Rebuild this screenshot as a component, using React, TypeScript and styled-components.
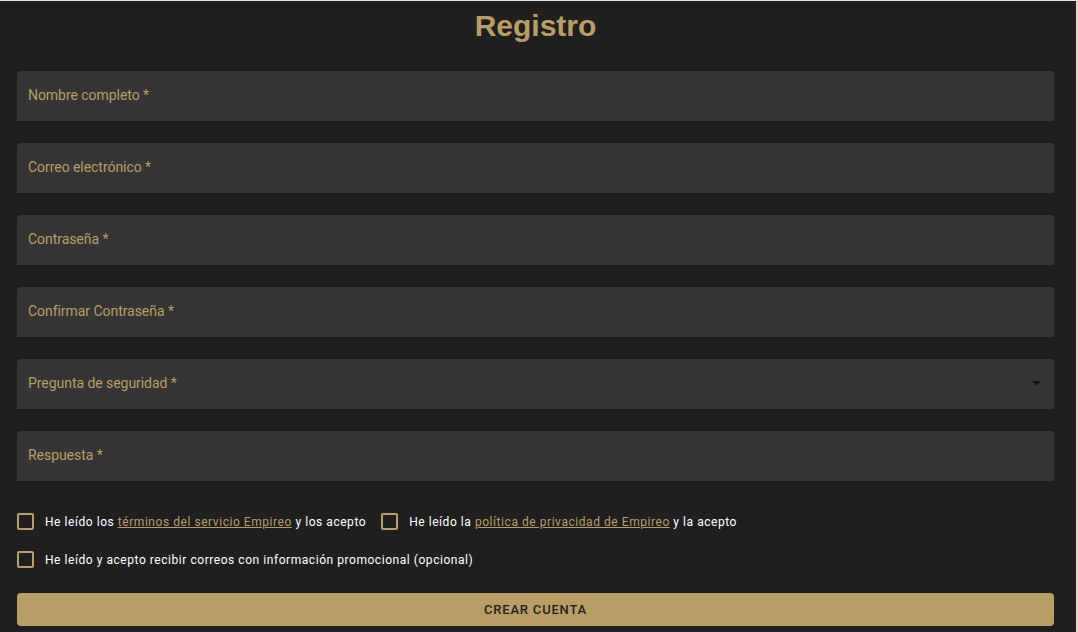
import React from "react";
import styled, { createGlobalStyle } from "styled-components";

const Global = createGlobalStyle`
  html, body { margin: 0; padding: 0; }
  body {
    background: #e9dcc3;
    border-top: 1px solid #e4e4e4;
    font-family: Roboto, "Liberation Sans", Arial, sans-serif;
  }
`;

const Page = styled.main`
  width: 1076px;
  min-height: 631px;
  box-sizing: border-box;
  background: #1f1f1f;
  padding: 7px 22px 0 17px;
  display: flex;
  flex-direction: column;
`;

const Title = styled.h1`
  margin: 0 0 27px;
  font-family: "Liberation Sans", Arial, sans-serif;
  font-weight: 700;
  font-size: 30px;
  line-height: 36px;
  text-align: center;
  color: #b89e65;
`;

const Fields = styled.div`
  display: flex;
  flex-direction: column;
  gap: 22px;
`;

const Field = styled.div`
  position: relative;
  height: 50px;
  background: #353535;
  border-radius: 4px 4px 0 0;
  display: flex;
  align-items: center;
  padding: 0 11px;
  box-sizing: border-box;
`;

const Label = styled.label`
  font-size: 14px;
  letter-spacing: -0.05px;
  color: #b89e65;
  margin-top: -2px;
`;

const Arrow = styled.svg`
  position: absolute;
  right: 13px;
  top: 50%;
  margin-top: -3px;
`;

const Checks = styled.div`
  margin-top: 32px;
  display: flex;
  flex-direction: column;
  gap: 21px;
`;

const CheckRow = styled.div`
  display: flex;
  align-items: center;
  gap: 15px;
`;

const CheckItem = styled.label`
  display: flex;
  align-items: center;
  gap: 11px;
  font-size: 12px;
  letter-spacing: 0.55px;
  color: #ffffff;
`;

const Box = styled.span`
  width: 17px;
  height: 17px;
  box-sizing: border-box;
  border: 2px solid #b89e65;
  border-radius: 2px;
  flex: none;
`;

const Link = styled.a`
  color: #b89e65;
  text-decoration: underline;
`;

const Button = styled.button`
  margin-top: 25px;
  height: 33px;
  border: none;
  border-radius: 4px;
  background: #b89e65;
  color: #1f1f1f;
  font-family: Roboto, "Liberation Sans", Arial, sans-serif;
  font-weight: 500;
  font-size: 13px;
  letter-spacing: 0.8px;
  text-transform: uppercase;
`;

const fields = [
  "Nombre completo",
  "Correo electrónico",
  "Contraseña",
  "Confirmar Contraseña",
  "Pregunta de seguridad",
  "Respuesta",
];

export default function App() {
  return (
    <>
      <Global />
      <Page>
        <Title>Registro</Title>
        <Fields>
          {fields.map((f) => (
            <Field key={f}>
              <Label>{f} *</Label>
              {f === "Pregunta de seguridad" && (
                <Arrow width="9" height="5" viewBox="0 0 9 5">
                  <path d="M0 0 L9 0 L4.5 4.5 Z" fill="#111111" />
                </Arrow>
              )}
            </Field>
          ))}
        </Fields>
        <Checks>
          <CheckRow>
            <CheckItem>
              <Box />
              <span>
                He leído los <Link>términos del servicio Empireo</Link> y los acepto
              </span>
            </CheckItem>
            <CheckItem>
              <Box />
              <span>
                He leído la <Link>política de privacidad de Empireo</Link> y la acepto
              </span>
            </CheckItem>
          </CheckRow>
          <CheckRow>
            <CheckItem>
              <Box />
              <span>
                He leído y acepto recibir correos con información promocional (opcional)
              </span>
            </CheckItem>
          </CheckRow>
        </Checks>
        <Button>Crear cuenta</Button>
      </Page>
    </>
  );
}
